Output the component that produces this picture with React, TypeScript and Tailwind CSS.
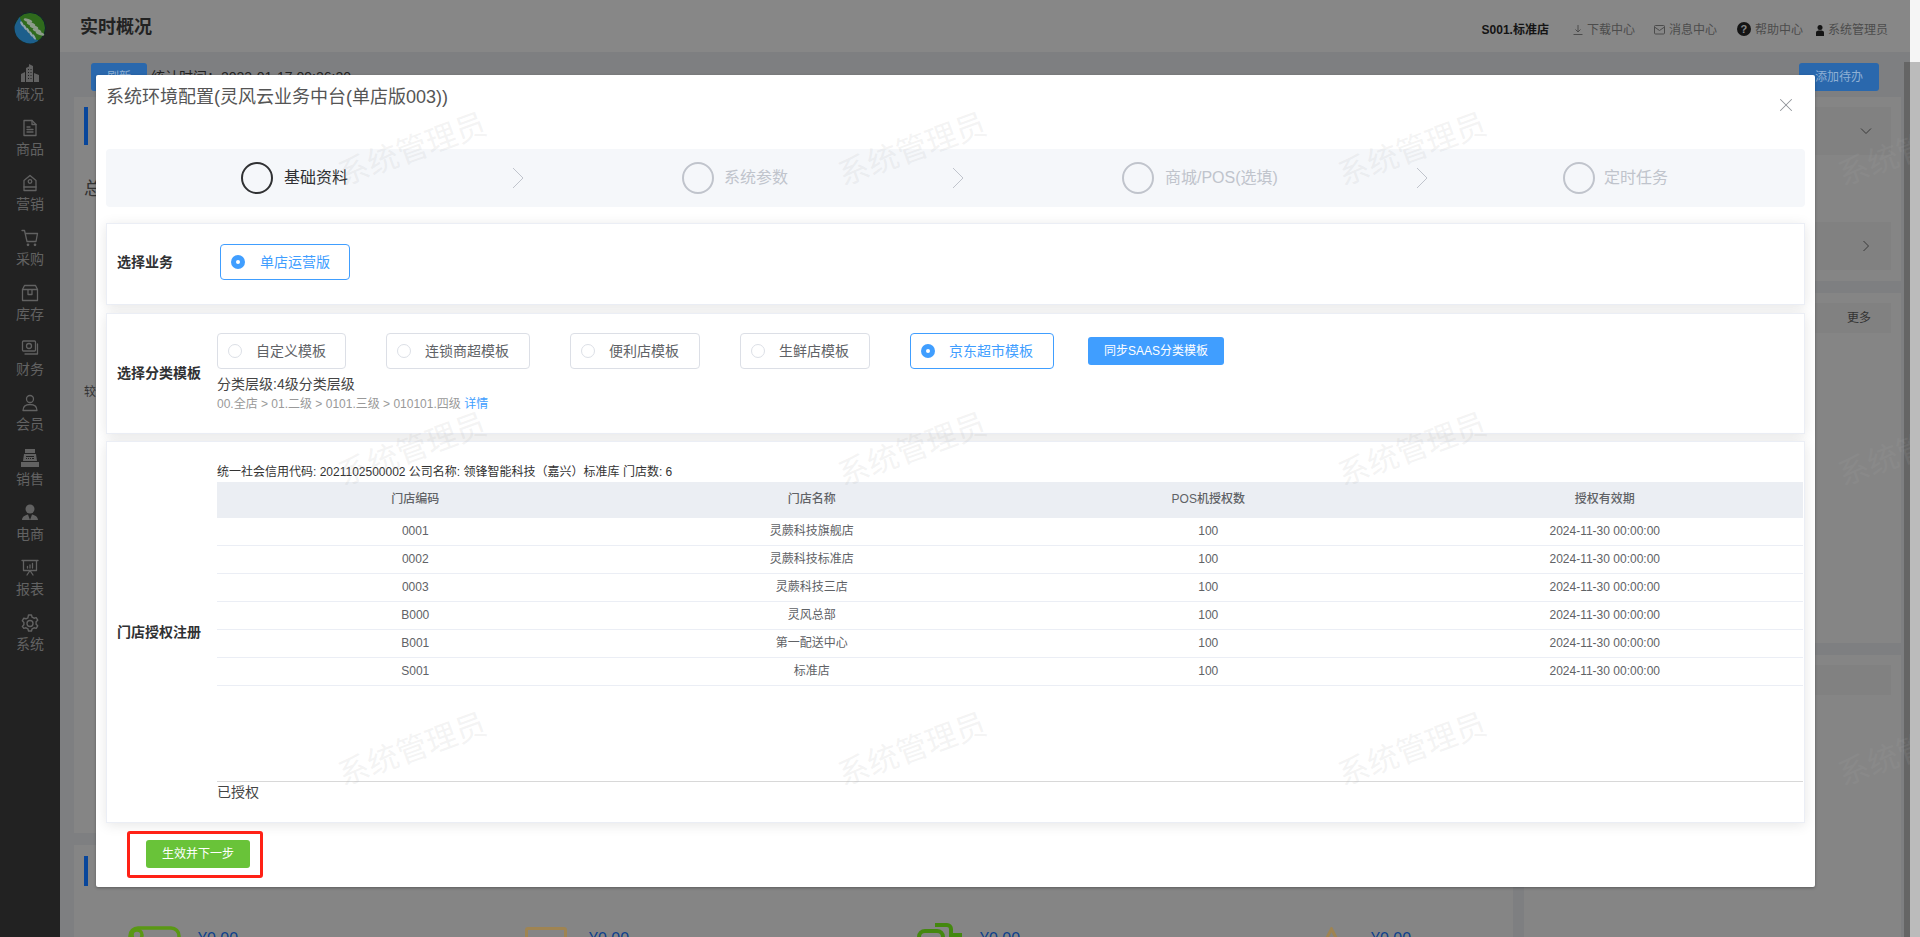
import React from "react";
import { X } from "lucide-react";

const FONT = "font-['Liberation_Sans','Noto_Sans_CJK_SC',sans-serif]";

const Ic = ({ children, sw = 1.3 }: { children: React.ReactNode; sw?: number }) => (
  <svg width="18" height="18" viewBox="0 0 18 18" fill="none" stroke="currentColor" strokeWidth={sw} strokeLinejoin="round" strokeLinecap="round">
    {children}
  </svg>
);

const navIcons: Record<string, React.ReactNode> = {
  概况: (
    <svg width="18" height="18" viewBox="0 0 18 18" fill="currentColor">
      <path d="M0 10l4-2v10H0zM5 4l3-1.500V0l1 .5L12 2v16H5zM13 9l5 2v7h-5z" />
      <path d="M7 5h1v1H7zM9.500 5h1v1h-1zM7 8h1v1H7zM9.500 8h1v1h-1zM7 11h1v1H7zM9.500 11h1v1h-1zM7 14h1v1H7zM9.500 14h1v1h-1z" fill="#222" />
    </svg>
  ),
  商品: (
    <Ic>
      <path d="M3 1.500h8l4 4v11H3z" />
      <path d="M11 1.500v4h4M6 8h3M6 10.500h6M6 13h6" />
    </Ic>
  ),
  营销: (
    <Ic>
      <path d="M3 6.500L9 1.500l6 5V16.500H3z" />
      <circle cx="9" cy="7.500" r="1.800" />
      <path d="M3 13h12" />
    </Ic>
  ),
  采购: (
    <Ic>
      <path d="M1 1.500h2.500L6 12.500h9l1.500-8H4.500" />
      <circle cx="7" cy="15.800" r="0.700" />
      <circle cx="14" cy="15.800" r="0.700" />
    </Ic>
  ),
  库存: (
    <Ic>
      <path d="M3.500 1.500h11l2 4v11h-15v-11z" />
      <path d="M1.500 5.500h15M7 5.500v5h4v-5" />
    </Ic>
  ),
  财务: (
    <Ic>
      <rect x="1.500" y="2" width="13" height="10" rx="1" />
      <circle cx="8" cy="7" r="2.500" />
      <path d="M4 15h12.500V5" />
    </Ic>
  ),
  会员: (
    <Ic>
      <circle cx="9" cy="5" r="3.500" />
      <path d="M2 16.500c0-4 3-6 7-6s7 2 7 6z" />
    </Ic>
  ),
  销售: (
    <svg width="18" height="18" viewBox="0 0 18 18" fill="currentColor">
      <path d="M4 0h10v4H4zM3 5h12l1 7H2zM0 13h18v5H0z" />
      <path d="M5 7h8v1H5zM5 9h1v1H5zM7 9h1v1H7zM9 9h1v1H9zM11 9h2v1h-2z" fill="#222" />
    </svg>
  ),
  电商: (
    <svg width="18" height="18" viewBox="0 0 18 18" fill="currentColor">
      <circle cx="9" cy="5" r="4.500" />
      <path d="M1 16c0-3 3-5 6-5.500L9 16l2-5.500c3 .5 6 2.500 6 5.500z" />
    </svg>
  ),
  报表: (
    <Ic>
      <path d="M1 1.500h16M2.500 1.500v10h13v-10M6 16l3-4.500 3 4.500" />
      <path d="M6.500 9V7.500M9 9V6M11.500 9V4.500" />
    </Ic>
  ),
  系统: (
    <Ic sw={1.4}>
      <path d="M7.500 1h3l.6 2.200 1.900 1 2.200-.6 1.500 2.600-1.600 1.600v2.400l1.600 1.600-1.500 2.600-2.200-.6-1.900 1-.6 2.200h-3l-.6-2.200-1.900-1-2.200.6L1.300 12.400l1.600-1.600V8.400L1.300 6.800 2.800 4.200l2.200.6 1.900-1z" />
      <circle cx="9" cy="9.500" r="3" />
    </Ic>
  ),
};

const fern = [
  [9, 9, 12], [12, 12.500, 14], [15, 15.500, 16], [18, 19, 18], [21, 22, 20],
];

const Logo = () => (
  <svg width="32" height="32" viewBox="0 0 32 32">
    <circle cx="16" cy="16" r="15.500" fill="#2f6a1c" stroke="#10212e" />
    <path d="M5.500 5C4 8 .5 12 .5 16a15.500 15.500 0 0 0 24 12.800C15 24 9 14 5.500 5z" fill="#1d5f8c" />
    {fern.map(([x, y], i) => (
      <g key={i}>
        <ellipse cx={x + 5} cy={y - 0.5} rx="4.500" ry="1.500" transform={`rotate(20 ${x + 5} ${y - 0.5})`} fill="#8d9c8b" />
        <ellipse cx={x - 1} cy={y + 3} rx="3" ry="1.200" transform={`rotate(60 ${x - 1} ${y + 3})`} fill="#8fa3ad" />
      </g>
    ))}
  </svg>
);

const Sidebar = () => (
  <aside className="w-[60px] flex-none bg-[#222222] flex flex-col items-center pt-3">
    <Logo />
    <div className="mt-[20px] flex flex-col items-center">
      {Object.keys(navIcons).map((k) => (
        <div key={k} className="h-[55px] flex flex-col items-center text-[#626262]">
          <div className="h-[18px] flex items-center justify-center">{navIcons[k]}</div>
          <div className="text-[14px] leading-[20px] mt-[2px]">{k}</div>
        </div>
      ))}
    </div>
  </aside>
);

const TopBar = () => (
  <header className="h-[52px] flex-none bg-[#878787] flex items-center">
    <h1 className="ml-[20px] mt-[2px] text-[18px] font-bold text-[#222222]">实时概况</h1>
    <div className="ml-auto mr-[22px] flex items-center text-[12px] text-[#4c4c4c] mt-[8px]">
      <span className="font-bold text-[#141414]">S001.标准店</span>
      <svg className="ml-[24px]" width="10" height="10" viewBox="0 0 10 10" fill="none" stroke="currentColor">
        <path d="M5 0v6.500M2.500 4.500L5 7l2.500-2.500M.5 9.500h9" />
      </svg>
      <span className="ml-[4px]">下载中心</span>
      <svg className="ml-[19px]" width="11" height="10" viewBox="0 0 11 10" fill="none" stroke="currentColor">
        <rect x=".5" y=".5" width="10" height="8.500" rx="1" />
        <path d="M.5 2l5 3.500 5-3.500" />
      </svg>
      <span className="ml-[4px]">消息中心</span>
      <span className="ml-[20px] w-[14px] h-[14px] rounded-full bg-[#141414] text-[#878787] text-[11px] font-bold leading-[14px] text-center -mt-[2px]">?</span>
      <span className="ml-[4px]">帮助中心</span>
      <svg className="ml-[13px]" width="8" height="11" viewBox="0 0 8 11" fill="#141414">
        <circle cx="4" cy="2.500" r="2.500" />
        <path d="M0 11V7.500C0 6 1.500 5.500 4 5.500s4 .5 4 2V11z" />
      </svg>
      <span className="ml-[4px]">系统管理员</span>
    </div>
  </header>
);

const Chev = ({ d }: { d: string }) => (
  <svg width="12" height="12" viewBox="0 0 12 12" fill="none" stroke="#3a3a3a">
    <path d={d} />
  </svg>
);

const Stat = ({ w, children }: { w: string; children: React.ReactNode }) => (
  <div className={`${w} flex-none flex items-start`}>{children}</div>
);

const BackgroundPage = () => (
  <div className="flex-1 min-w-0 flex bg-[#7e7f81]">
    <div className="flex-1 min-w-0 flex flex-col">
      <div className="mt-[11px] h-[28px] flex items-center justify-between pl-[31px] pr-[25px] flex-none">
        <div className="flex items-center">
          <span className="w-[56px] h-[28px] rounded-[3px] bg-[#2a68ad] text-[#8fb0d4] text-[12px] flex items-center justify-center">刷新</span>
          <span className="ml-[4px] text-[14px] text-[#222222]">统计时间：2023-01-17 09:26:20</span>
        </div>
        <span className="w-[80px] h-[28px] rounded-[3px] bg-[#2a68ad] text-[#8fb0d4] text-[12px] flex items-center justify-center">添加待办</span>
      </div>
      <div className="mt-[6px] ml-[14px] flex gap-[11px] min-h-0 flex-1 overflow-hidden">
        <div className="w-[1439px] flex-none flex flex-col gap-[12px]">
          <section className="h-[736px] flex-none bg-[#858585] pt-[10px] pl-[10px] text-[#333333]">
            <div className="w-[4px] h-[38px] bg-[#08469b]" />
            <div className="mt-[31px] text-[18px] leading-[26px]">总销售额</div>
            <div className="mt-[181px] text-[12px] leading-[18px]">较昨日</div>
          </section>
          <section className="flex-1 bg-[#858585] pt-[11px] pl-[10px]">
            <div className="w-[4px] h-[30px] bg-[#08469b]" />
            <div className="mt-[40px] flex pl-[44px] text-[16px] leading-[20px] text-[#0c3f8c]">
              <Stat w="w-[397px]">
                <svg width="53" height="40" viewBox="0 0 53 40" fill="none" stroke="#5a9814" strokeWidth="3.500">
                  <rect x="2" y="2" width="49" height="36" rx="8" />
                  <circle cx="9" cy="9" r="5" />
                </svg>
                <span className="ml-[17px] mt-[3px]">¥0.00</span>
              </Stat>
              <Stat w="w-[392px]">
                <span className="w-[42px] h-[40px] mt-[1px] border-[3px] border-[#9f8452] rounded-[3px]" />
                <span className="ml-[22px] mt-[3px]">¥0.00</span>
              </Stat>
              <Stat w="w-[401px]">
                <svg className="-mt-[3px]" width="47" height="40" viewBox="0 0 47 40" fill="none" stroke="#44880f" strokeWidth="4">
                  <rect x="2" y="8" width="24" height="26" rx="6" />
                  <path d="M18 2h12a4 4 0 0 1 4 4v6h11" />
                </svg>
                <span className="ml-[16px] mt-[3px]">¥0.00</span>
              </Stat>
              <Stat w="w-[100px]">
                <svg className="mt-[1px]" width="27" height="24" viewBox="0 0 27 24" fill="none" stroke="#9f8452" strokeWidth="3"><path d="M13.500 2L25 24H2z" /></svg>
                <span className="ml-[26px] mt-[3px]">¥0.00</span>
              </Stat>
            </div>
          </section>
        </div>
        <div className="w-[377px] flex-none flex flex-col gap-[12px] text-[#333333]">
          <section className="h-[184px] flex-none bg-[#858585] p-[10px] flex flex-col">
            <div className="h-[48px] bg-[#818181] flex items-center justify-end pr-[19px]"><Chev d="M1 3.500l5 5 5-5" /></div>
            <div className="mt-[67px] h-[48px] bg-[#818181] flex items-center justify-end pr-[19px]"><Chev d="M3.500 1l5 5-5 5" /></div>
          </section>
          <section className="h-[350px] flex-none bg-[#858585] p-[10px]">
            <div className="h-[30px] bg-[#818181] flex items-center justify-end pr-[20px] text-[12px]">更多</div>
          </section>
          <section className="flex-1 bg-[#858585] p-[10px]">
            <div className="h-[30px] bg-[#818181]" />
          </section>
        </div>
      </div>
    </div>
    <div className="w-[6px] flex-none mt-[10px] bg-[#656565]" />
  </div>
);

const Radio = ({ label, on, w, gap = "ml-[14px]" }: { label: string; on?: boolean; w: string; gap?: string }) => (
  <label className={`${w} h-[36px] flex-none rounded-[4px] border flex items-center pl-[10px] text-[14px] ${on ? "border-[#409eff] text-[#409eff]" : "border-[#dcdfe6] text-[#606266]"}`}>
    {on ? (
      <span className="w-[14px] h-[14px] rounded-full bg-[#409eff] flex items-center justify-center">
        <span className="w-[4px] h-[4px] rounded-full bg-white" />
      </span>
    ) : (
      <span className="w-[14px] h-[14px] rounded-full border border-[#dcdfe6] bg-white" />
    )}
    <span className={gap}>{label}</span>
  </label>
);

const steps = [
  { t: "基础资料", on: true, w: "w-[441px]", tg: "ml-[11px]", gap: "ml-[164px]" },
  { t: "系统参数", on: false, w: "w-[440px]", tg: "ml-[10px]", gap: "ml-[164px]" },
  { t: "商城/POS(选填)", on: false, w: "w-[441px]", tg: "ml-[11px]", gap: "ml-[138px]" },
  { t: "定时任务", on: false, w: "w-[200px]", tg: "ml-[9px]", gap: "" },
];

const Steps = () => (
  <div className="h-[58px] rounded-[4px] bg-[#f5f7fa] flex items-center pl-[135px]">
    {steps.map((s, i) => (
      <div key={s.t} className={`${s.w} flex-none flex items-center`}>
        <span className={`w-[32px] h-[32px] flex-none rounded-full border-2 ${s.on ? "border-[#303133]" : "border-[#c0c4cc]"}`} />
        <span className={`${s.tg} text-[16px] whitespace-nowrap ${s.on ? "text-[#303133]" : "text-[#c0c4cc]"}`}>{s.t}</span>
        {i < 3 && (
          <svg className={`${s.gap} flex-none`} width="12" height="22" viewBox="0 0 12 22" fill="none" stroke="#c0c4cc">
            <path d="M1 1l10 10L1 21" />
          </svg>
        )}
      </div>
    ))}
  </div>
);

const Card = ({ label, cls, labelCls = "items-center", children }: { label: string; cls: string; labelCls?: string; children: React.ReactNode }) => (
  <section className={`${cls} flex-none bg-white border border-[#ebeef5] shadow-[0_2px_12px_rgba(0,0,0,0.1)] flex`}>
    <div className={`${labelCls} w-[110px] flex-none pl-[10px] flex text-[14px] font-bold text-[#303133] whitespace-nowrap`}>{label}</div>
    <div className="flex-1 min-w-0">{children}</div>
  </section>
);

const rows = [
  ["0001", "灵蕨科技旗舰店"],
  ["0002", "灵蕨科技标准店"],
  ["0003", "灵蕨科技三店"],
  ["B000", "灵风总部"],
  ["B001", "第一配送中心"],
  ["S001", "标准店"],
];

const Table = () => (
  <div className="mr-[1px] h-[300px] border-b border-[#d8d8d8] text-[12px] text-[#606266]">
    <div className="grid grid-cols-4 h-[36px] bg-[#ebeef3] items-center text-center font-medium pb-[2px]">
      <div>门店编码</div>
      <div>门店名称</div>
      <div>POS机授权数</div>
      <div>授权有效期</div>
    </div>
    {rows.map((r) => (
      <div key={r[0]} className="grid grid-cols-4 h-[28px] border-b border-[#ebeef5] items-center text-center pb-[2px]">
        <div>{r[0]}</div>
        <div>{r[1]}</div>
        <div>100</div>
        <div>2024-11-30 00:00:00</div>
      </div>
    ))}
  </div>
);

const Modal = () => (
  <div className="w-[1719px] h-[812px] rounded-[2px] bg-white shadow-[0_1px_3px_rgba(0,0,0,0.3)] px-[10px] flex flex-col">
    <div className="h-[74px] flex-none flex items-start justify-between">
      <h2 className="mt-[10px] text-[18px] leading-[24px] text-[#555555] font-normal">系统环境配置(灵风云业务中台(单店版003))</h2>
      <X className="mt-[19px] mr-[8px] text-[#909399]" size={22} strokeWidth={1.1} />
    </div>
    <Steps />
    <div className="mt-[16px] flex flex-col">
      <Card label="选择业务" cls="h-[82px]" labelCls="items-center pb-[3px]">
        <div className="pt-[20px] flex">
          <div className="ml-[3px]"><Radio label="单店运营版" on w="w-[130px]" gap="ml-[15px]" /></div>
        </div>
      </Card>
      <div className="h-[8px]" />
      <Card label="选择分类模板" cls="h-[121px]">
        <div className="pt-[19px]">
          <div className="flex items-center">
            <Radio label="自定义模板" w="w-[129px]" />
            <div className="ml-[40px]"><Radio label="连锁商超模板" w="w-[144px]" /></div>
            <div className="ml-[40px]"><Radio label="便利店模板" w="w-[130px]" /></div>
            <div className="ml-[40px]"><Radio label="生鲜店模板" w="w-[130px]" /></div>
            <div className="ml-[40px]"><Radio label="京东超市模板" on w="w-[144px]" /></div>
            <span className="ml-[34px] w-[136px] h-[28px] rounded-[3px] bg-[#409eff] text-white text-[12px] flex items-center justify-center">同步SAAS分类模板</span>
          </div>
          <div className="mt-[5px] text-[14px] leading-[20px] text-[#444444]">分类层级:4级分类层级</div>
          <div className="mt-[1px] text-[12px] leading-[18px] text-[#999999]">
            00.全店 &gt; 01.二级 &gt; 0101.三级 &gt; 010101.四级 <span className="text-[#409eff]">详情</span>
          </div>
        </div>
      </Card>
      <div className="h-[7px]" />
      <Card label="门店授权注册" cls="h-[382px]">
        <div className="pt-[23px]">
          <div className="h-[17px] text-[12px] leading-[15px] text-[#333333]">统一社会信用代码: 2021102500002 公司名称: 领锋智能科技（嘉兴）标准库 门店数: 6</div>
          <Table />
          <div className="text-[14px] leading-[20px] text-[#444444]">已授权</div>
        </div>
      </Card>
    </div>
    <div className="mt-[8px] ml-[21px] w-[136px] h-[47px] flex-none rounded-[3px] border-[3px] border-[#ff2116] pl-[16px] pt-[6px]">
      <button className="w-[104px] h-[28px] rounded-[3px] bg-[#69c339] text-white text-[12px]">生效并下一步</button>
    </div>
  </div>
);

const Watermarks = () => (
  <div className="absolute top-0 left-[162px] w-[1748px] h-full overflow-hidden pointer-events-none grid grid-cols-[repeat(4,500px)] grid-rows-[repeat(3,300px)]">
    {Array.from({ length: 12 }).map((_, i) => (
      <div key={i} className="flex items-center justify-center">
        <span className="rotate-[-20deg] text-[31px] whitespace-nowrap text-[rgba(170,170,170,0.14)]">系统管理员</span>
      </div>
    ))}
  </div>
);

export default function App() {
  return (
    <div className={`${FONT} relative w-[1920px] h-[937px] overflow-hidden flex`}>
      <Sidebar />
      <div className="w-[1850px] flex-none flex flex-col">
        <TopBar />
        <BackgroundPage />
      </div>
      <div className="w-[10px] flex-none flex flex-col">
        <div className="h-[62px] bg-[#f5f5f5]" />
        <div className="flex-1 bg-[#bbbbbb]" />
      </div>
      <div className="absolute top-[75px] left-[96px]">
        <Modal />
      </div>
      <Watermarks />
    </div>
  );
}
